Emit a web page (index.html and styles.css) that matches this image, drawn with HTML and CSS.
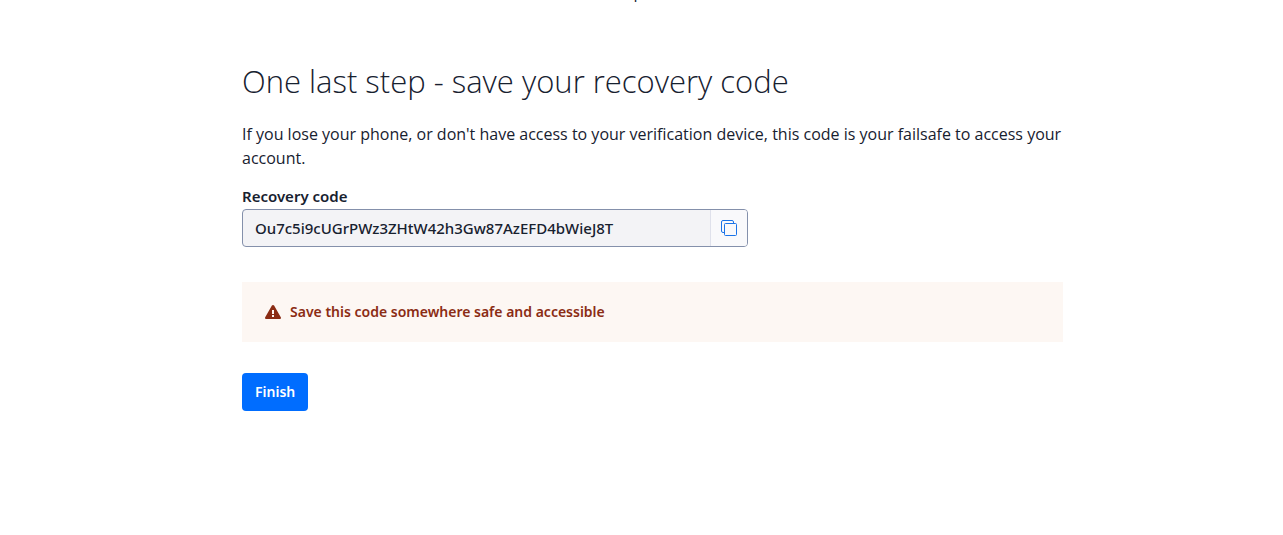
FILE: index.html
```html
<!DOCTYPE html>
<html lang="en">
<head>
<meta charset="utf-8">
<meta name="viewport" content="width=device-width, initial-scale=1">
<title>Save your recovery code</title>
<link rel="stylesheet" href="styles.css">
</head>
<body>
<header class="topbar"><span class="topbar-text">p</span></header>
<main class="page">
  <h1 class="title">One last step - save your recovery code</h1>
  <p class="intro">If you lose your phone, or don't have access to your verification device, this code is your failsafe to access your account.</p>
  <form class="form">
    <label class="label" for="code">Recovery code</label>
    <div class="code-field">
      <input class="code-input" id="code" type="text" value="Ou7c5i9cUGrPWz3ZHtW42h3Gw87AzEFD4bWieJ8T" readonly>
      <button class="copy" type="button" aria-label="Copy recovery code">
        <svg width="16" height="16" viewBox="0 0 16 16" fill="none" stroke="#1a73e8" aria-hidden="true"><path d="M3.5 12.5H2A1.5 1.5 0 0 1 .5 11V2A1.5 1.5 0 0 1 2 .5h9A1.5 1.5 0 0 1 12.500 2v1.500"/><rect x="3.500" y="3.500" width="12" height="12" rx="1"/></svg>
      </button>
    </div>
    <div class="alert" role="alert">
      <svg width="16" height="16" viewBox="0 0 16 16" aria-hidden="true"><path fill="#8b2c14" d="M6.900 1.600a1.250 1.250 0 0 1 2.200 0l6.700 11.600a1.200 1.200 0 0 1-1.050 1.800H1.250A1.200 1.200 0 0 1 .2 13.200z"/><path fill="#fcf6f2" d="M7 6h2v4H7zM7 11h2v2H7z"/></svg>
      <span>Save this code somewhere safe and accessible</span>
    </div>
    <button class="finish" type="button">Finish</button>
  </form>
</main>
</body>
</html>
```
FILE: styles.css
```css
* { box-sizing: border-box; }
body {
  margin: 0;
  background: #fff;
  color: #17212f;
  font: 400 16px/24px "Open Sans", "Noto Sans", sans-serif;
}
.topbar {
  display: flex;
  align-items: flex-end;
  justify-content: center;
  height: 2px;
  padding-right: 6px;
  overflow: hidden;
}
.topbar-text { line-height: 16px; }
.page { padding: 55px 220px 32px 242px; }
.title { margin: 0 0 17px; font-size: 31px; font-weight: 300; line-height: 48px; }
.intro { margin: 0 0 16px; }
.form { display: flex; flex-direction: column; align-items: flex-start; }
.label { margin-bottom: 3px; font: 600 15px/20px "Noto Sans", "Open Sans", sans-serif; }
.code-field {
  display: flex;
  width: 506px;
  max-width: 100%;
  height: 38px;
  border: 1px solid #8490ab;
  border-radius: 4px;
  background: #f3f3f6;
  overflow: hidden;
}
.code-input {
  flex: 1;
  min-width: 0;
  padding: 0 12px;
  border: 0;
  background: none;
  color: inherit;
  font: 500 15px/20px "Noto Sans", "Open Sans", sans-serif;
}
.copy {
  display: grid;
  place-items: center;
  width: 37px;
  padding: 0;
  border: 0;
  border-left: 1px solid #dfe1eb;
  background: #f9f9fb;
}
.alert {
  display: flex;
  align-items: center;
  gap: 9px;
  width: 100%;
  min-height: 60px;
  margin: 35px 0 31px;
  padding: 0 23px;
  background: #fdf7f3;
  color: #8b2c14;
  font: 600 14px/20px "Noto Sans", "Open Sans", sans-serif;
}
.finish {
  height: 38px;
  padding: 0 13px;
  border: 0;
  border-radius: 4px;
  background: #006dff;
  color: #fff;
  font: 600 14px/20px "Noto Sans", "Open Sans", sans-serif;
}
```
